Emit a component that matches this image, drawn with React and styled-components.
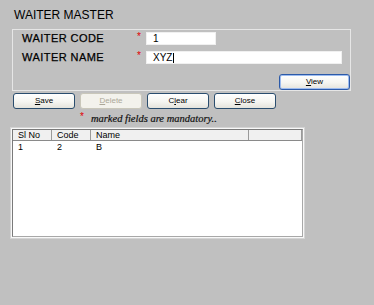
import React from 'react';
import styled, { createGlobalStyle } from 'styled-components';

const Global = createGlobalStyle`
  html, body { margin: 0; padding: 0; background: #c0c0c0; }
  body { font-family: "Liberation Sans", Arial, sans-serif; color: #000; }
`;

const Page = styled.div`
  width: 374px;
  height: 305px;
  background: #c0c0c0;
  display: flex;
  flex-direction: column;
  align-items: flex-start;
`;

const Title = styled.div`
  height: 29px;
  box-sizing: border-box;
  padding: 8px 0 0 14px;
  font-size: 12px;
  line-height: 14px;
`;

const Panel = styled.div`
  margin-left: 12px;
  width: 339px;
  height: 62px;
  box-sizing: border-box;
  border: 1px solid #e6e6e6;
  padding: 2px 0 0 9px;
  display: flex;
  flex-direction: column;
`;

const Fields = styled.div`
  display: grid;
  grid-template-columns: 115px 9px 1fr;
  grid-auto-rows: 13px;
  row-gap: 6px;
  padding-right: 8px;
  align-items: center;
`;

const Label = styled.div`
  font-size: 11px;
  letter-spacing: 0.45px;
  line-height: 13px;
  -webkit-text-stroke: 0.25px #000;
`;

const Star = styled.span`
  color: #e00000;
  font-size: 10px;
  line-height: 10px;
  align-self: start;
`;

const Field = styled.div`
  box-sizing: border-box;
  height: 13px;
  width: ${p => (p.$w ? `${p.$w}px` : '100%')};
  background: #fff;
  border: 1px solid #f0f0f0;
  padding-left: 6px;
  font-size: 10px;
  line-height: 11px;
  display: flex;
  align-items: center;
`;

const Caret = styled.span`
  display: inline-block;
  width: 1px;
  height: 10px;
  background: #000;
  margin-left: 1px;
`;

const ViewRow = styled.div`
  margin-top: 10px;
  display: flex;
  justify-content: flex-end;
`;

const Btn = styled.button`
  box-sizing: border-box;
  width: ${p => p.$w || 62}px;
  height: 16px;
  padding: 0;
  margin: 0;
  border: 1px solid ${p => (p.disabled ? '#c9c7ba' : p.$focused ? '#2c5aa8' : '#2a4d6e')};
  border-radius: 3px;
  background: ${p => (p.disabled ? '#f3f2ec' : 'linear-gradient(#ffffff, #f5f5f1 55%, #e4e3dc)')};
  box-shadow: ${p => (p.$focused ? 'inset 0 0 0 1px #9dbcf0' : 'none')};
  font-family: "Liberation Sans", Arial, sans-serif;
  font-size: 8px;
  line-height: 14px;
  color: ${p => (p.disabled ? '#aca899' : '#000')};
  cursor: default;
  u { text-decoration: underline; }
`;

const ButtonBar = styled.div`
  margin: 2px 0 0 13px;
  display: flex;
  gap: 5px;
`;

const Note = styled.div`
  height: 18px;
  padding-left: 80px;
  display: flex;
  align-items: center;
  gap: 7px;
`;

const NoteStar = styled.span`
  color: #e00000;
  font-size: 10px;
  line-height: 10px;
  margin-top: -3px;
`;

const NoteText = styled.span`
  font-family: "Liberation Serif", "Times New Roman", serif;
  font-style: italic;
  font-size: 10.5px;
  color: #111;
  -webkit-text-stroke: 0.2px #111;
`;

const Frame = styled.div`
  margin-left: 10px;
  width: 295px;
  height: 112px;
  box-sizing: border-box;
  border: 1px solid #d4d4d4;
  padding: 1px;
  background: #f8f8f8;
  display: flex;
`;

const Grid = styled.div`
  flex: 1;
  box-sizing: border-box;
  border: 1px solid;
  border-color: #7a7a7a #a8a8a8 #a8a8a8 #7a7a7a;
  background: #fff;
  display: flex;
  flex-direction: column;
`;

const Row = styled.div`
  display: grid;
  grid-template-columns: 39px 39px 158px 1fr;
  height: ${p => (p.$head ? 10 : 12)}px;
  background: ${p => (p.$head ? '#f0f0f0' : '#fff')};
  border-bottom: ${p => (p.$head ? '1px solid #8a8a8a' : 'none')};
`;

const Cell = styled.div`
  box-sizing: border-box;
  padding-left: 5px;
  font-size: 9px;
  line-height: ${p => (p.$head ? 10 : 13)}px;
  border-right: 1px solid ${p => (p.$head ? '#9a9a9a' : 'transparent')};
  white-space: nowrap;
`;

const columns = ['Sl No', 'Code', 'Name', ''];
const rows = [['1', '2', 'B', '']];

export default function App() {
  return (
    <Page>
      <Global />
      <Title>WAITER MASTER</Title>
      <Panel>
        <Fields>
          <Label>WAITER CODE</Label>
          <Star>*</Star>
          <Field $w={70}>1</Field>
          <Label>WAITER NAME</Label>
          <Star>*</Star>
          <Field>XYZ<Caret /></Field>
        </Fields>
        <ViewRow>
          <Btn $w={71} $focused><u>V</u>iew</Btn>
        </ViewRow>
      </Panel>
      <ButtonBar>
        <Btn><u>S</u>ave</Btn>
        <Btn disabled><u>D</u>elete</Btn>
        <Btn>C<u>l</u>ear</Btn>
        <Btn><u>C</u>lose</Btn>
      </ButtonBar>
      <Note>
        <NoteStar>*</NoteStar>
        <NoteText>marked fields are mandatory..</NoteText>
      </Note>
      <Frame>
        <Grid>
          <Row $head>
            {columns.map((c, i) => <Cell $head key={i}>{c}</Cell>)}
          </Row>
          {rows.map((r, ri) => (
            <Row key={ri}>
              {r.map((c, i) => <Cell key={i}>{c}</Cell>)}
            </Row>
          ))}
        </Grid>
      </Frame>
    </Page>
  );
}
